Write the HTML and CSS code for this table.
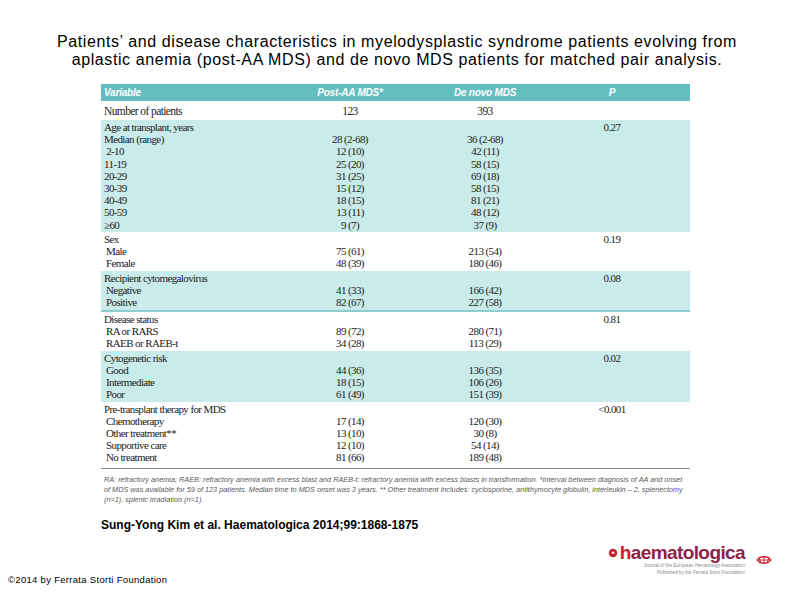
FILE: index.html
```html
<!DOCTYPE html>
<html>
<head>
<meta charset="utf-8">
<link rel="stylesheet" href="styles.css">
</head>
<body>
<div class="slide">
  <h1 class="title">Patients’ and disease characteristics in myelodysplastic syndrome patients evolving from<br>aplastic anemia (post-AA MDS) and de novo MDS patients for matched pair analysis.</h1>

  <div class="table">
    <div class="grid head">
      <div class="l">Variable</div><div class="c">Post-AA MDS*</div><div class="c">De novo MDS</div><div class="c">P</div><div></div>
    </div>
    <div class="grid sec white num">
      <div class="l">Number of patients</div><div class="c">123</div><div class="c">393</div><div></div><div></div>
    </div>
    <div class="grid sec cyan age">
      <div class="l">Age at transplant, years</div><div></div><div></div><div class="c">0.27</div><div></div>
      <div class="l">Median (range)</div><div class="c">28 (2-68)</div><div class="c">36 (2-68)</div><div></div><div></div>
      <div class="l">&nbsp;2-10</div><div class="c">12 (10)</div><div class="c">42 (11)</div><div></div><div></div>
      <div class="l">11-19</div><div class="c">25 (20)</div><div class="c">58 (15)</div><div></div><div></div>
      <div class="l">20-29</div><div class="c">31 (25)</div><div class="c">69 (18)</div><div></div><div></div>
      <div class="l">30-39</div><div class="c">15 (12)</div><div class="c">58 (15)</div><div></div><div></div>
      <div class="l">40-49</div><div class="c">18 (15)</div><div class="c">81 (21)</div><div></div><div></div>
      <div class="l">50-59</div><div class="c">13 (11)</div><div class="c">48 (12)</div><div></div><div></div>
      <div class="l">≥60</div><div class="c">9 (7)</div><div class="c">37 (9)</div><div></div><div></div>
    </div>
    <div class="grid sec white">
      <div class="l">Sex</div><div></div><div></div><div class="c">0.19</div><div></div>
      <div class="l i">Male</div><div class="c">75 (61)</div><div class="c">213 (54)</div><div></div><div></div>
      <div class="l i">Female</div><div class="c">48 (39)</div><div class="c">180 (46)</div><div></div><div></div>
    </div>
    <div class="grid sec cyan cmv">
      <div class="l">Recipient cytomegalovirus</div><div></div><div></div><div class="c">0.08</div><div></div>
      <div class="l i">Negative</div><div class="c">41 (33)</div><div class="c">166 (42)</div><div></div><div></div>
      <div class="l i">Positive</div><div class="c">82 (67)</div><div class="c">227 (58)</div><div></div><div></div>
    </div>
    <div class="grid sec white">
      <div class="l">Disease status</div><div></div><div></div><div class="c">0.81</div><div></div>
      <div class="l i">RA or RARS</div><div class="c">89 (72)</div><div class="c">280 (71)</div><div></div><div></div>
      <div class="l i">RAEB or RAEB-t</div><div class="c">34 (28)</div><div class="c">113 (29)</div><div></div><div></div>
    </div>
    <div class="grid sec cyan">
      <div class="l">Cytogenetic risk</div><div></div><div></div><div class="c">0.02</div><div></div>
      <div class="l i">Good</div><div class="c">44 (36)</div><div class="c">136 (35)</div><div></div><div></div>
      <div class="l i">Intermediate</div><div class="c">18 (15)</div><div class="c">106 (26)</div><div></div><div></div>
      <div class="l i">Poor</div><div class="c">61 (49)</div><div class="c">151 (39)</div><div></div><div></div>
    </div>
    <div class="grid sec white last">
      <div class="l">Pre-transplant therapy for MDS</div><div></div><div></div><div class="c">&lt;0.001</div><div></div>
      <div class="l i">Chemotherapy</div><div class="c">17 (14)</div><div class="c">120 (30)</div><div></div><div></div>
      <div class="l i">Other treatment**</div><div class="c">13 (10)</div><div class="c">30 (8)</div><div></div><div></div>
      <div class="l i">Supportive care</div><div class="c">12 (10)</div><div class="c">54 (14)</div><div></div><div></div>
      <div class="l i">No treatment</div><div class="c">81 (66)</div><div class="c">189 (48)</div><div></div><div></div>
    </div>
    <p class="foot">RA: refractory anemia; RAEB: refractory anemia with excess blast and RAEB-t: refractory anemia with excess blasts in transformation. *Interval between diagnosis of AA and onset<br>of MDS was available for 59 of 123 patients. Median time to MDS onset was 3 years. ** Other treatment includes: cyclosporine, antithymocyte globulin, interleukin – 2, splenectomy<br>(n=1), splenic irradiation (n=1).</p>
  </div>

  <p class="cite">Sung-Yong Kim et al. Haematologica 2014;99:1868-1875</p>

  <div class="footer">
    <p class="copy">©2014 by Ferrata Storti Foundation</p>
    <div class="logo">
      <div class="logo-main">
        <div class="logo-word">
          <svg class="drop" width="10" height="10" viewBox="0 0 10 10"><circle cx="5" cy="5" r="4.2" fill="#c8202e"/><path d="M3 5.5 L5 3 L7 5.5 Z" fill="#fff"/></svg>
          <span class="h">h</span>aematologica
        </div>
        <div class="logo-sub">Journal of the European Hematology Association<br>Published by the Ferrata Storti Foundation</div>
      </div>
      <svg class="flourish" width="18" height="10" viewBox="0 0 18 10"><ellipse cx="9" cy="5" rx="6" ry="3.2" fill="none" stroke="#c8202e" stroke-width="1.4"/><path d="M1 5 H17 M4 2 L6 8 M9 1.5 V8.5 M14 2 L12 8" stroke="#c8202e" stroke-width="0.9"/></svg>
    </div>
  </div>
</div>
</body>
</html>
```

FILE: styles.css
```css
html, body {
  margin: 0;
  padding: 0;
  background: #fff;
}

.slide {
  width: 794px;
  height: 595px;
  display: flex;
  flex-direction: column;
  overflow: hidden;
  font-family: "Liberation Sans", Arial, sans-serif;
  color: #000;
}

.title {
  margin: 33px 0 0;
  font-size: 16px;
  font-weight: normal;
  line-height: 18px;
  letter-spacing: 0.6px;
  text-align: center;
  color: #000;
}

.table {
  margin: 15px 0 0 101px;
  width: 589px;
  font-family: "Liberation Serif", "Times New Roman", serif;
  font-size: 11px;
  letter-spacing: -0.6px;
  color: #222;
}

.grid {
  display: grid;
  grid-template-columns: 190px 118px 152px 102px 27px;
}

.head {
  background: #64bebf;
  height: 17px;
  align-items: center;
  color: #fff;
  font-family: "Liberation Sans Narrow", "Liberation Sans", Arial, sans-serif;
  font-weight: bold;
  font-style: italic;
  font-size: 10px;
  letter-spacing: -0.2px;
}

.l {
  padding-left: 3px;
  white-space: nowrap;
}

.l.i {
  padding-left: 5px;
}

.c {
  text-align: center;
  white-space: nowrap;
}

.sec {
  line-height: 12px;
  padding: 1px 0 2px;
}

.age {
  line-height: 12.2px;
  padding-bottom: 1px;
}

.num {
  padding: 4px 0 3px;
  font-size: 11.5px;
}

.white {
  background: #fff;
}

.cyan {
  background: #c9ebea;
}

.cmv {
  border-bottom: 2px solid #8fcdcc;
}

.last {
  padding-bottom: 5px;
}

.foot {
  margin: 0;
  border-top: 1px solid #8a8a8a;
  padding: 6px 0 0 3px;
  font-family: "Liberation Sans", Arial, sans-serif;
  font-style: italic;
  font-size: 7.3px;
  line-height: 10px;
  letter-spacing: 0;
  color: #5a5a5a;
  white-space: nowrap;
}

.cite {
  margin: 13px 0 0 101px;
  font-size: 12px;
  font-weight: bold;
  line-height: 14px;
  letter-spacing: 0;
}

.footer {
  margin-top: auto;
  display: flex;
  justify-content: space-between;
  align-items: flex-end;
  padding: 0 21px 9px 8px;
}

.copy {
  margin: 0;
  font-size: 9.5px;
  line-height: 12px;
  letter-spacing: 0.3px;
}

.logo {
  display: flex;
  align-items: center;
  gap: 10px;
  margin-bottom: 10px;
}

.logo-main {
  display: flex;
  flex-direction: column;
  align-items: flex-end;
}

.logo-word {
  display: flex;
  align-items: center;
  font-family: "Liberation Sans", Arial, sans-serif;
  font-weight: bold;
  font-size: 19px;
  line-height: 20px;
  letter-spacing: -0.6px;
  color: #8e2346;
}

.logo-word .h {
  color: #c8202e;
}

.drop {
  margin-right: 2px;
}

.logo-sub {
  font-size: 4.7px;
  line-height: 6.5px;
  color: #8a8a8a;
  text-align: right;
}
```
